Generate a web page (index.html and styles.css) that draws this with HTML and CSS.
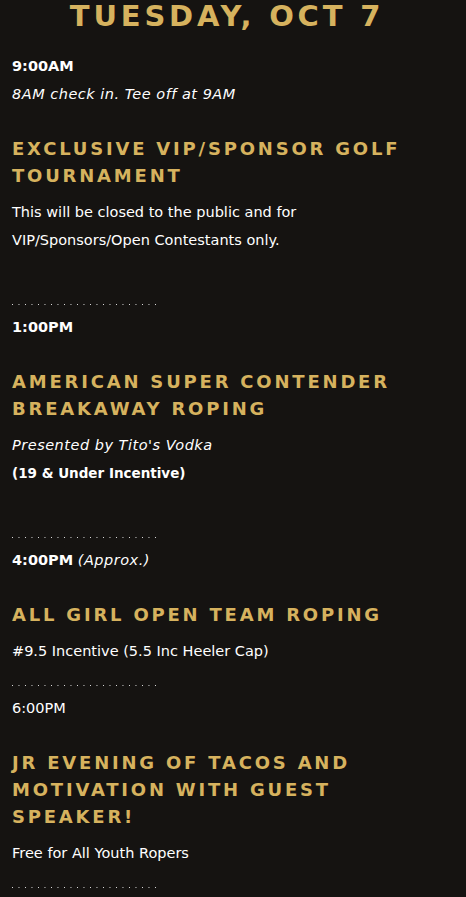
FILE: index.html
```html
<!DOCTYPE html>
<html lang="en">
<head>
<meta charset="utf-8">
<title>Schedule - Tuesday, Oct 7</title>
<link rel="stylesheet" href="styles.css">
</head>
<body>
<main class="schedule">
  <h2 class="day">TUESDAY, OCT 7</h2>

  <section class="event">
    <p class="time"><strong>9:00AM</strong></p>
    <p class="text"><em>8AM check in. Tee off at 9AM</em></p>
    <h3 class="title">EXCLUSIVE VIP/SPONSOR GOLF TOURNAMENT</h3>
    <p class="text">This will be closed to the public and for<br>VIP/Sponsors/Open Contestants only.</p>
    <p class="spacer">&nbsp;</p>
  </section>
  <div class="dots"></div>

  <section class="event">
    <p class="time"><strong>1:00PM</strong></p>
    <h3 class="title">AMERICAN SUPER CONTENDER BREAKAWAY ROPING</h3>
    <p class="text"><em>Presented by Tito's Vodka</em></p>
    <p class="text"><strong>(19 &amp; Under Incentive)</strong></p>
    <p class="spacer">&nbsp;</p>
  </section>
  <div class="dots"></div>

  <section class="event">
    <p class="time"><strong>4:00PM</strong> <em>(Approx.)</em></p>
    <h3 class="title">ALL GIRL OPEN TEAM ROPING</h3>
    <p class="text">#9.5 Incentive (5.5 Inc Heeler Cap)</p>
  </section>
  <div class="dots"></div>

  <section class="event">
    <p class="time">6:00PM</p>
    <h3 class="title">JR EVENING OF TACOS AND MOTIVATION WITH GUEST SPEAKER!</h3>
    <p class="text">Free for All Youth Ropers</p>
  </section>
  <div class="dots"></div>
</main>
</body>
</html>
```

FILE: styles.css
```css
html, body {
  margin: 0;
  padding: 0;
  background: #151311;
}

body {
  color: #ffffff;
  font-family: "DejaVu Sans", sans-serif;
  font-size: 14.5px;
  line-height: 28px;
}

.schedule {
  padding: 0 12px 0 12px;
}

.day {
  margin: -1px 0 19px 0;
  text-align: center;
  color: #d6b25e;
  font-family: "DejaVu Sans", sans-serif;
  font-weight: bold;
  font-size: 29px;
  line-height: 34px;
  letter-spacing: 3.8px;
  padding-right: 12px;
}

.event p {
  margin: 0;
}

.time strong {
  font-weight: 700;
}

.text strong {
  font-weight: 700;
  font-size: 13.5px;
}

.event em {
  letter-spacing: 0.5px;
}

.title {
  margin: 27px 0 9px 0;
  color: #d6b25e;
  font-family: "DejaVu Sans", sans-serif;
  font-weight: bold;
  font-size: 18px;
  line-height: 27px;
  letter-spacing: 2.8px;
}

.spacer {
  height: 30px;
  line-height: 30px;
}

.dots {
  width: 144px;
  height: 1px;
  margin: 20px 0 8px 0;
  background-image: linear-gradient(to right, #e0e0e0 0 1px, transparent 1px);
  background-size: 6.5px 1px;
  background-repeat: repeat-x;
}
```
